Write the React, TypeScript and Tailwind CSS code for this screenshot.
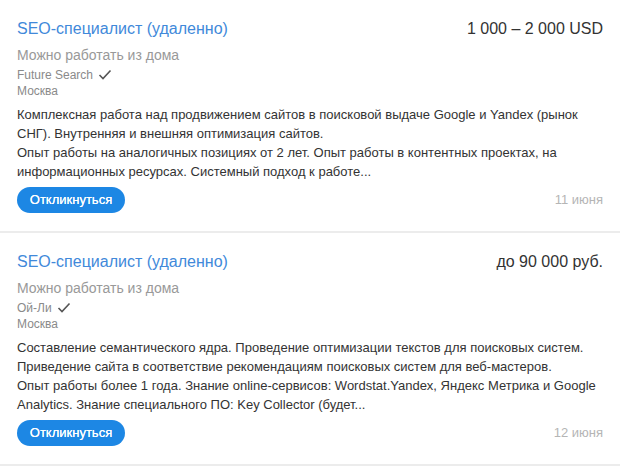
const vacancies = [
  {
    title: 'SEO-специалист (удаленно)',
    salary: '1 000 – 2 000 USD',
    company: 'Future Search',
    city: 'Москва',
    lines: [
      'Комплексная работа над продвижением сайтов в поисковой выдаче Google и Yandex (рынок СНГ). Внутренняя и внешняя оптимизация сайтов.',
      'Опыт работы на аналогичных позициях от 2 лет. Опыт работы в контентных проектах, на информационных ресурсах. Системный подход к работе...',
    ],
    date: '11 июня',
  },
  {
    title: 'SEO-специалист (удаленно)',
    salary: 'до 90 000 руб.',
    company: 'Ой-Ли',
    city: 'Москва',
    lines: [
      'Составление семантического ядра. Проведение оптимизации текстов для поисковых систем. Приведение сайта в соответствие рекомендациям поисковых систем для веб-мастеров.',
      'Опыт работы более 1 года. Знание online-сервисов: Wordstat.Yandex, Яндекс Метрика и Google Analytics. Знание специального ПО: Key Collector (будет...',
    ],
    date: '12 июня',
  },
];

function Check() {
  return (
    <svg width="14" height="12" viewBox="0 0 14 12" className="ml-[5px]">
      <path d="M1.5 6 L5 9.5 L12.5 1.5" fill="none" stroke="#555" strokeWidth="1.6" />
    </svg>
  );
}

export default function App() {
  return (
    <div className="w-[620px] bg-white font-['Liberation_Sans',Arial,sans-serif]">
      {vacancies.map((v, i) => (
        <div key={i} className="border-b-2 border-[#ececec] px-[17px] pt-[18px] pb-[18px]">
          <div className="flex items-center justify-between">
            <a className="text-[16px] leading-[22px] text-[#4189da]">{v.title}</a>
            <div className="text-[16px] leading-[22px] text-[#333]">{v.salary}</div>
          </div>
          <div className="mt-[6px] text-[14px] leading-[18px] text-[#999]">Можно работать из дома</div>
          <div className="mt-[3px] flex items-center text-[12px] leading-[16px] text-[#8a8a8a]">
            {v.company}
            <Check />
          </div>
          <div className="text-[12px] leading-[16px] text-[#8a8a8a]">{v.city}</div>
          <div className="mt-[6px] text-[13px] leading-[19px] text-[#333]">
            {v.lines.map((l, j) => (
              <div key={j}>{l}</div>
            ))}
          </div>
          <div className="mt-[6px] flex items-center justify-between">
            <button className="h-[26px] w-[108px] rounded-full bg-[#1d87e4] text-[13px] text-white [text-shadow:0_0_0.4px_#fff]">
              Откликнуться
            </button>
            <span className="text-[13px] text-[#b5b5b5]">{v.date}</span>
          </div>
        </div>
      ))}
    </div>
  );
}
